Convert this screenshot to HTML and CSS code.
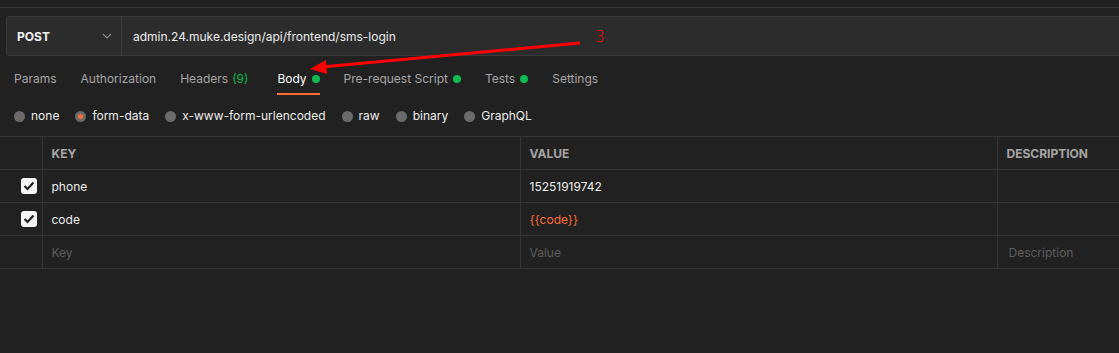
FILE: index.html
```html
<!DOCTYPE html>
<html lang="en">
<head>
  <meta charset="UTF-8">
  <title>Request</title>
  <link rel="stylesheet" href="styles.css">
</head>
<body>
  <div class="top-strip"></div>

  <!-- barra de la petición -->
  <div class="request-bar">
    <div class="method">
      <span>POST</span>
      <svg class="chevron" width="10" height="6" viewBox="0 0 10 6"><path d="M1 1l4 4 4-4" fill="none" stroke="#8c8c8c" stroke-width="1.2"/></svg>
    </div>
    <div class="url">admin.24.muke.design/api/frontend/sms-login</div>
  </div>

  <!-- pestañas -->
  <div class="tabs">
    <div class="tab">Params</div>
    <div class="tab">Authorization</div>
    <div class="tab headers">Headers <span class="count">(9)</span></div>
    <div class="tab active">Body <span class="dot"></span></div>
    <div class="tab">Pre-request Script <span class="dot"></span></div>
    <div class="tab">Tests <span class="dot"></span></div>
    <div class="tab">Settings</div>
  </div>

  <!-- tipos de body -->
  <div class="body-types">
    <label class="radio"><span class="circle"></span>none</label>
    <label class="radio"><span class="circle on"></span>form-data</label>
    <label class="radio"><span class="circle"></span>x-www-form-urlencoded</label>
    <label class="radio"><span class="circle"></span>raw</label>
    <label class="radio"><span class="circle"></span>binary</label>
    <label class="radio"><span class="circle"></span>GraphQL</label>
  </div>

  <!-- tabla de parámetros -->
  <table class="params">
    <tr class="head">
      <td class="check-col"></td>
      <td class="key-col">KEY</td>
      <td class="value-col">VALUE</td>
      <td>DESCRIPTION</td>
    </tr>
    <tr>
      <td class="check-col"><span class="checkbox"><svg width="12" height="10" viewBox="0 0 12 10"><path d="M1.5 5l3 3 6-6.5" fill="none" stroke="#212121" stroke-width="2.2"/></svg></span></td>
      <td>phone</td>
      <td>15251919742</td>
      <td></td>
    </tr>
    <tr>
      <td class="check-col"><span class="checkbox"><svg width="12" height="10" viewBox="0 0 12 10"><path d="M1.5 5l3 3 6-6.5" fill="none" stroke="#212121" stroke-width="2.2"/></svg></span></td>
      <td>code</td>
      <td class="var">{{code}}</td>
      <td></td>
    </tr>
    <tr class="empty">
      <td class="check-col"></td>
      <td>Key</td>
      <td>Value</td>
      <td class="desc">Description</td>
    </tr>
  </table>

  <!-- anotación -->
  <svg class="annotation" width="620" height="80" viewBox="0 0 620 80">
    <line x1="580" y1="43" x2="322" y2="67" stroke="#ff0000" stroke-width="3"/>
    <path d="M310 69 L326 60 L327 74 Z" fill="#ff0000"/>
  </svg>
  <span class="note">3</span>
</body>
</html>
```

FILE: styles.css
```css
/* Base */
body {
  margin: 0;
  background-color: #212121;
  font-family: Inter, "Noto Sans", sans-serif;
  font-size: 12px;
  color: #ededed;
  position: relative;
  height: 353px;
  overflow: hidden;
}
.top-strip {
  height: 7px;
  border-bottom: 1px solid #353535;
}
/* Barra de petición */
.request-bar {
  display: flex;
  margin: 8px 0 0 6px;
  height: 38px;
  background-color: #2c2c2c;
  border: 1px solid #3a3a3a;
  border-right: none;
  border-radius: 4px 0 0 4px;
}
.method {
  width: 115px;
  box-sizing: border-box;
  display: flex;
  align-items: center;
  justify-content: space-between;
  padding: 0 9px 0 10px;
  border-right: 1px solid #3a3a3a;
  font-weight: 700;
  color: #f2f2f2;
}
.url {
  display: flex;
  align-items: center;
  padding-left: 11px;
  color: #ededed;
}
/* Pestañas */
.tabs {
  display: flex;
  gap: 24px;
  margin: 6px 0 0 14px;
}
.tab {
  padding: 8px 0 5px;
  line-height: 18px;
  border-bottom: 2px solid transparent;
  color: #a6a6a6;
  display: flex;
  align-items: center;
  gap: 5px;
}
.tab.headers {
  padding-right: 5px;
}
.tab.active {
  color: #ffffff;
  border-bottom-color: #ff6c37;
}
.count {
  color: #0cbb52;
  margin-left: -1px;
}
.dot {
  width: 8px;
  height: 8px;
  border-radius: 50%;
  background-color: #0cbb52;
}
/* Tipos de body */
.body-types {
  display: flex;
  gap: 16px;
  margin: 12px 0 0 14px;
  line-height: 18px;
}
.radio {
  display: flex;
  align-items: center;
  gap: 6px;
  color: #ededed;
}
.circle {
  width: 11px;
  height: 11px;
  border-radius: 50%;
  background-color: #6b6b6b;
  box-sizing: border-box;
}
.circle.on {
  border: 3px solid #6b6b6b;
  background-color: #ff6c37;
}
/* Tabla */
.params {
  margin-top: 11px;
  width: 1140px;
  border-collapse: collapse;
  table-layout: fixed;
}
.params td {
  height: 32px;
  padding: 0 9px;
  border-top: 1px solid #353535;
  border-bottom: 1px solid #353535;
  border-left: 1px solid #353535;
  white-space: nowrap;
}
.params td.check-col {
  width: 42px;
  padding: 0 5px 0 0;
  border-left: none;
  text-align: right;
  box-sizing: border-box;
}
.params .key-col {
  width: 459px;
}
.params .value-col {
  width: 458px;
}
.params .head td {
  font-weight: 700;
  color: #a6a6a6;
}
.params .empty td {
  color: #5e5e5e;
}
.params .empty .desc {
  padding-left: 11px;
}
.params .var {
  color: #ff6c37;
}
.checkbox {
  display: inline-flex;
  align-items: center;
  justify-content: center;
  width: 16px;
  height: 16px;
  background-color: #f5f5f5;
  border-radius: 3px;
  vertical-align: middle;
}
/* Anotación */
.annotation {
  position: absolute;
  top: 0;
  left: 0;
}
.note {
  position: absolute;
  top: 28px;
  left: 595px;
  color: #ff0000;
  font-family: "DejaVu Sans", sans-serif;
  font-weight: 200;
  font-size: 15px;
}
```
